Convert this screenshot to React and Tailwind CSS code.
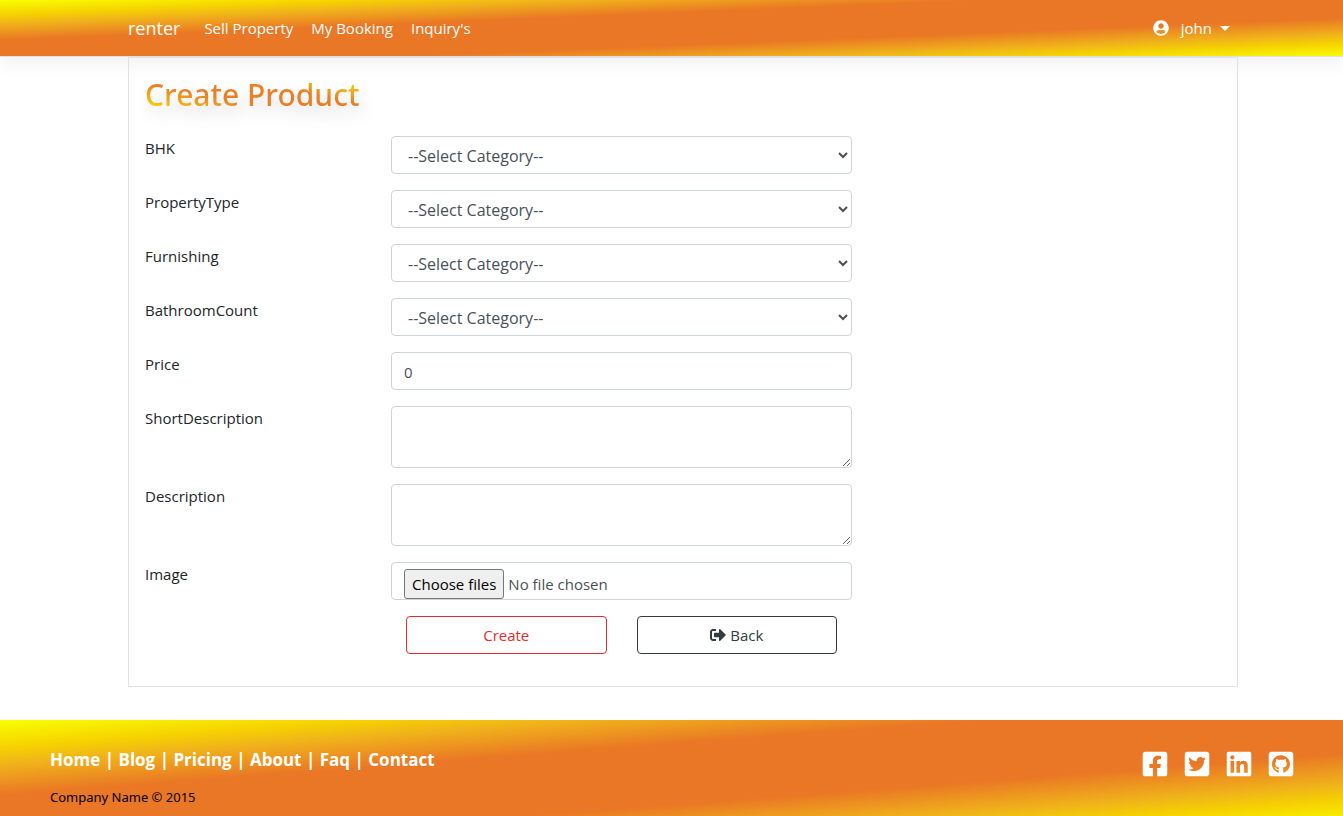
import { FaUserCircle, FaSignOutAlt, FaFacebookSquare, FaTwitterSquare, FaLinkedin, FaGithubSquare } from "react-icons/fa";

const selects = ["BHK", "PropertyType", "Furnishing", "BathroomCount"];
const footerLinks = ["Home", "Blog", "Pricing", "About", "Faq", "Contact"];
const socials = [
  ["Facebook", FaFacebookSquare],
  ["Twitter", FaTwitterSquare],
  ["LinkedIn", FaLinkedin],
  ["GitHub", FaGithubSquare],
];

const sunset =
  "bg-[linear-gradient(to_bottom_right,#f9ff00_0%,#f6d300_13%,#f0b41a_21%,#ea7725_36%,#ea7725_65%,#f0b41a_80%,#f6d300_88%,#f9ff00_100%)]";

const control =
  "block w-full rounded border border-[#ced4da] bg-white px-3 leading-6 text-[#495057]";

function Row({ id, label, children }) {
  return (
    <div className="mb-4 flex">
      <label htmlFor={id} className="w-[246px] shrink-0 leading-6">
        {label}
      </label>
      <div className="w-full max-w-[461px]">{children}</div>
    </div>
  );
}

export default function App() {
  return (
    <div className="flex min-h-screen flex-col overflow-x-hidden bg-white font-['Open_Sans','Noto_Sans',sans-serif] text-[15px] leading-6 text-[#212529]">
      <header className={`${sunset} bg-[length:102%_100%] border-b border-[#dee2e6] pr-[105px] pl-32 shadow-[0_8px_16px_rgba(0,0,0,0.05)]`}>
        <nav className="flex h-14 items-center text-white">
          <a href="#" className="mr-6 text-[18px]">renter</a>
          <div className="flex gap-[18px]">
            <a href="#">Sell Property</a>
            <a href="#">My Booking</a>
            <a href="#">Inquiry's</a>
          </div>
          <button type="button" className="mr-2 ml-auto flex items-center">
            <FaUserCircle className="mr-3 size-4" />
            john
            <svg viewBox="0 0 10 5" className="ml-2 h-[5px] w-[10px]" fill="currentColor">
              <path d="M0 0h10L5 5z" />
            </svg>
          </button>
        </nav>
      </header>

      <main className="mr-[105px] ml-32 border border-[#dee2e6] px-4 pt-4 pb-8">
        <h1 className="mb-5 inline-block bg-[linear-gradient(to_top_right,#f9ff00_0%,#f6d300_13%,#f0b41a_21%,#ea7f25_40%,#ea7f25_65%,#f0b41a_80%,#f6d300_88%,#f9ff00_100%)] bg-clip-text font-['Noto_Sans','Open_Sans',sans-serif] text-[30px] leading-[42px] font-medium text-transparent drop-shadow-[4px_8px_8px_rgba(0,0,0,0.15)]">
          Create Product
        </h1>
        <form>
          {selects.map((name) => (
            <Row key={name} id={name} label={name}>
              <select id={name} className={`${control} h-[38px] pt-[2px] text-base`}>
                <option>--Select Category--</option>
              </select>
            </Row>
          ))}
          <Row id="Price" label="Price">
            <input id="Price" type="text" defaultValue="0" className={`${control} h-[38px] pt-[2px]`} />
          </Row>
          <Row id="ShortDescription" label="ShortDescription">
            <textarea id="ShortDescription" className={`${control} h-[62px]`} />
          </Row>
          <Row id="Description" label="Description">
            <textarea id="Description" className={`${control} h-[62px]`} />
          </Row>
          <Row id="Image" label="Image">
            <label className={`${control} flex h-[38px] items-end`}>
              <input id="Image" type="file" multiple className="sr-only" />
              <span className="mr-1 flex h-[30px] items-center rounded-[3px] border border-[#767676] bg-[#efefef] px-[7px] text-black">
                Choose files
              </span>
              <span className="leading-[30px]">No file chosen</span>
            </label>
          </Row>
          <div className="ml-[246px] grid max-w-[461px] grid-cols-2 gap-[30px] px-[15px]">
            <button type="submit" className="h-[38px] rounded border border-[#e12d2d] text-[#e12d2d]">
              Create
            </button>
            <a href="#" className="flex h-[38px] items-center justify-center gap-1 rounded border border-[#343a40] text-[#343a40]">
              <FaSignOutAlt className="size-4" />
              Back
            </a>
          </div>
        </form>
      </main>

      <footer className={`${sunset} bg-[length:102%_109%] mt-[33px] flex grow items-start justify-between pr-12 pl-[50px]`}>
        <div>
          <p className="mt-7 text-[17px] leading-6 font-bold text-white">
            {footerLinks.map((name, i) => (
              <span key={name}>
                {i > 0 && " | "}
                <a href="#">{name}</a>
              </span>
            ))}
          </p>
          <p className="mt-[15px] font-['Noto_Sans','Open_Sans',sans-serif] text-[13px] leading-5 text-black">Company Name © 2015</p>
        </div>
        <div className="mt-[30px] flex gap-[14px]">
          {socials.map(([name, Icon]) => (
            <a key={name} href="#" aria-label={name} className="text-white">
              <Icon className="size-7" />
            </a>
          ))}
        </div>
      </footer>
    </div>
  );
}
